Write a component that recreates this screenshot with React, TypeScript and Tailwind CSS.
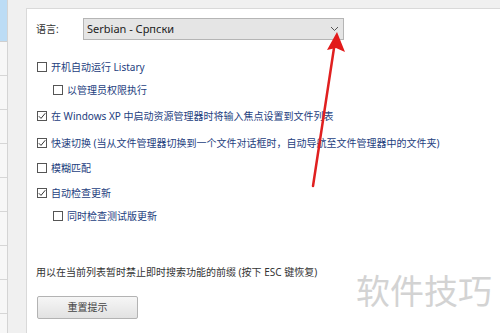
import React from "react";

const font = { fontFamily: '"Noto Sans", "Noto Sans CJK SC", sans-serif' };

function Box({ checked }: { checked?: boolean }) {
  return (
    <span className="w-[10px] h-[10px] border border-[#555] bg-white flex items-center justify-center shrink-0">
      {checked && (
        <svg width="8" height="8" viewBox="0 0 8 8">
          <path d="M0.8 4.2 L3 6.4 L7.3 1.2" fill="none" stroke="#333" strokeWidth="1" />
        </svg>
      )}
    </span>
  );
}

function Row({ checked, indent, text, className }: { checked?: boolean; indent?: boolean; text: string; className: string }) {
  return (
    <div className={`flex items-center gap-[4px] h-[12px] ${indent ? "pl-[16px]" : ""} ${className}`}>
      <Box checked={checked} />
      <span className="text-[10px] leading-[12px] text-[#24407e] whitespace-nowrap">{text}</span>
    </div>
  );
}

export default function App() {
  const lines = [0, 1, 2, 3, 4, 5, 6, 7, 8];
  return (
    <div className="w-[500px] h-[333px] flex bg-[#f0f0f0] overflow-hidden relative" style={font}>
      <div className="w-[8px] h-full bg-[#f7f7f7] border-r border-[#d4d4d4] flex flex-col shrink-0">
        <div className="h-[42px] bg-[#bcdcf5] border-b border-[#cfcfcf] shrink-0" />
        {lines.map((i) => (
          <div key={i} className="h-[34px] border-b border-[#d6d6d6] shrink-0" />
        ))}
      </div>
      <div className="w-[18px] shrink-0" />
      <div className="flex-1 mt-[8px] bg-white border-l border-t border-[#d9d9d9] pl-[9px] flex flex-col">
        <div className="flex items-center mt-[9px] h-[22px]">
          <span className="text-[10px] text-[#333] w-[47px]">语言:</span>
          <div className="w-[261px] h-[22px] bg-[#e5e5e5] border border-[#b5b5b5] flex items-center justify-between pl-[3px] pr-[4px]">
            <span className="text-[11px] text-[#222]">Serbian - Српски</span>
            <svg width="9" height="6" viewBox="0 0 9 6">
              <path d="M1 1 L4.5 4.5 L8 1" fill="none" stroke="#555" strokeWidth="1" />
            </svg>
          </div>
        </div>
        <Row text="开机自动运行 Listary" className="mt-[21px] ml-[1px]" />
        <Row indent text="以管理员权限执行" className="mt-[11px] ml-[1px]" />
        <Row checked text="在 Windows XP 中启动资源管理器时将输入焦点设置到文件列表" className="mt-[14px] ml-[1px]" />
        <Row checked text="快速切换 (当从文件管理器切换到一个文件对话框时，自动导航至文件管理器中的文件夹)" className="mt-[15px] ml-[1px]" />
        <Row text="模糊匹配" className="mt-[13px] ml-[1px]" />
        <Row checked text="自动检查更新" className="mt-[13px] ml-[1px]" />
        <Row indent text="同时检查测试版更新" className="mt-[11px] ml-[1px]" />
        <div className="mt-[44px] text-[10px] leading-[12px] text-[#333] whitespace-nowrap">
          用以在当前列表暂时禁止即时搜索功能的前缀 (按下 ESC 键恢复)
        </div>
        <button className="mt-[18px] ml-[1px] w-[101px] h-[23px] rounded-[2px] border border-[#b3b3b3] bg-gradient-to-b from-[#f6f6f6] to-[#e2e2e2] text-[10px] text-[#444] flex items-center justify-center">
          重置提示
        </button>
      </div>
      <div className="absolute left-[356px] top-[270px] text-[34px] leading-[42px] text-[#d3d3d3] whitespace-nowrap" style={font}>
        软件技巧
      </div>
      <svg className="absolute left-0 top-0" width="500" height="333" viewBox="0 0 500 333">
        <line x1="313" y1="186" x2="334" y2="48" stroke="#e02020" strokeWidth="2.5" strokeLinecap="round" />
        <path d="M337 32 L345 52 L336 48 L327 50 Z" fill="#e21a1a" />
      </svg>
    </div>
  );
}
